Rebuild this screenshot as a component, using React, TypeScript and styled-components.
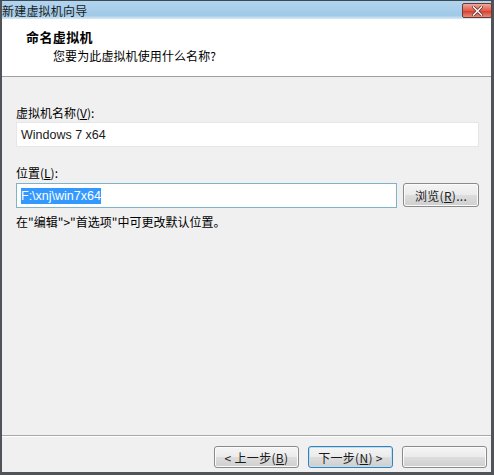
import React from "react";
import styled, { createGlobalStyle } from "styled-components";

const Global = createGlobalStyle`
  html, body { margin: 0; padding: 0; background: #f0f0f0; }
  body { font-family: "Noto Sans CJK SC", "Liberation Sans", sans-serif; }
  * { box-sizing: border-box; }
`;

const Window = styled.div`
  width: 494px;
  height: 475px;
  display: flex;
  flex-direction: column;
  background: #f0f0f0;
  border-left: 2px solid #505458;
  border-right: 3px solid #505458;
  border-bottom: 3px solid #505458;
  border-top: 1px solid #3d4a56;
  font-size: 12px;
  color: #000;
`;

const TitleBar = styled.div`
  height: 18px;
  display: flex;
  justify-content: space-between;
  align-items: flex-start;
  background: linear-gradient(#b3d5ee, #9fc9e7 80%, #d8eaf6);
  padding-top: 2px;
`;

const TitleText = styled.span`
  font-family: "Noto Sans CJK SC", sans-serif;
  font-size: 12px;
  line-height: 16px;
  color: #1b1b1b;
  letter-spacing: 0.2px;
`;

const CloseButton = styled.div`
  width: 30px;
  height: 15px;
  margin-right: -1px;
  border: 1px solid #6a3b36;
  border-radius: 2px;
  background: linear-gradient(#f0a79c, #e35c4c 50%, #d3402f 55%, #e88a79);
  display: flex;
  align-items: center;
  justify-content: center;
`;

const Header = styled.div`
  height: 58px;
  background: #fff;
  border-bottom: 1px solid #a0a0a0;
  padding: 9px 0 0 24px;
`;

const HeaderTitle = styled.div`
  font-size: 13px;
  font-weight: bold;
  line-height: 18px;
  letter-spacing: 0.4px;
`;

const HeaderSub = styled.div`
  font-size: 12px;
  line-height: 18px;
  margin-top: 1px;
  padding-left: 27px;
  letter-spacing: 0.1px;
`;

const Body = styled.div`
  flex: 1;
  padding: 28px 14px 0 14px;
  display: flex;
  flex-direction: column;
`;

const Label = styled.div<{ $gap?: number }>`
  font-size: 12px;
  line-height: 16px;
  margin-top: ${(p) => p.$gap ?? 0}px;
`;

const Field = styled.div<{ $focused?: boolean }>`
  height: 25px;
  flex: 1;
  background: #fff;
  border: 1px solid ${(p) => (p.$focused ? "#7fb2cb" : "#e6e6e6")};
  display: flex;
  align-items: center;
  padding-left: 4px;
  font-family: "Liberation Sans", "Noto Sans CJK SC", sans-serif;
  font-size: 12.5px;
  color: #1a1a1a;
`;

const FieldRow = styled.div<{ $gap?: number }>`
  display: flex;
  gap: 6px;
  margin-top: ${(p) => p.$gap ?? 1}px;
  width: 463px;
`;

const Selected = styled.span`
  background: #3399ff;
  color: #fff;
  padding: 1px 0;
`;

const Button = styled.div<{ $default?: boolean; $w?: number }>`
  width: ${(p) => p.$w ?? 85}px;
  height: ${(p) => (p.$default !== undefined ? 22 : 24)}px;
  border: 1px solid ${(p) => (p.$default ? "#3c7fb1" : "#8a8a8a")};
  box-shadow: ${(p) => (p.$default ? "inset 0 0 0 1px #b7e0f7" : "inset 0 0 0 1px #fbfbfb")};
  border-radius: 3px;
  background: linear-gradient(#f5f5f5, #ebebeb 50%, #dddddd 51%, #cfcfcf);
  display: flex;
  align-items: center;
  justify-content: center;
  font-size: 12px;
  color: #1a1a1a;
  letter-spacing: 0.3px;
`;

const Footer = styled.div`
  height: 37px;
  border-top: 1px solid #a8a8a8;
  box-shadow: inset 0 1px 0 #ffffff;
  display: flex;
  justify-content: flex-end;
  align-items: flex-start;
  gap: 9px;
  padding: 10px 4px 0 0;
`;

export default function App() {
  return (
    <>
      <Global />
      <Window>
        <TitleBar>
          <TitleText>新建虚拟机向导</TitleText>
          <CloseButton>
            <svg width="11" height="10" viewBox="0 0 11 10">
              <path d="M1.5 1 L9.5 9 M9.5 1 L1.5 9" stroke="#5a2a25" strokeWidth="3" strokeLinecap="square" />
              <path d="M1.5 1 L9.5 9 M9.5 1 L1.5 9" stroke="#f4f4f4" strokeWidth="1.6" strokeLinecap="square" />
            </svg>
          </CloseButton>
        </TitleBar>
        <Header>
          <HeaderTitle>命名虚拟机</HeaderTitle>
          <HeaderSub>您要为此虚拟机使用什么名称?</HeaderSub>
        </Header>
        <Body>
          <Label>虚拟机名称(<u>V</u>):</Label>
          <FieldRow>
            <Field>Windows 7 x64</Field>
          </FieldRow>
          <Label $gap={18}>位置(<u>L</u>):</Label>
          <FieldRow $gap={2}>
            <Field $focused>
              <Selected>F:\xnj\win7x64</Selected>
            </Field>
            <Button $w={76}>浏览(<u>R</u>)...</Button>
          </FieldRow>
          <Label $gap={6}>在"编辑"&gt;"首选项"中可更改默认位置。</Label>
        </Body>
        <Footer>
          <Button $default={false}>&lt; 上一步(<u>B</u>)</Button>
          <Button $default>下一步(<u>N</u>) &gt;</Button>
          <Button $default={false}></Button>
        </Footer>
      </Window>
    </>
  );
}
